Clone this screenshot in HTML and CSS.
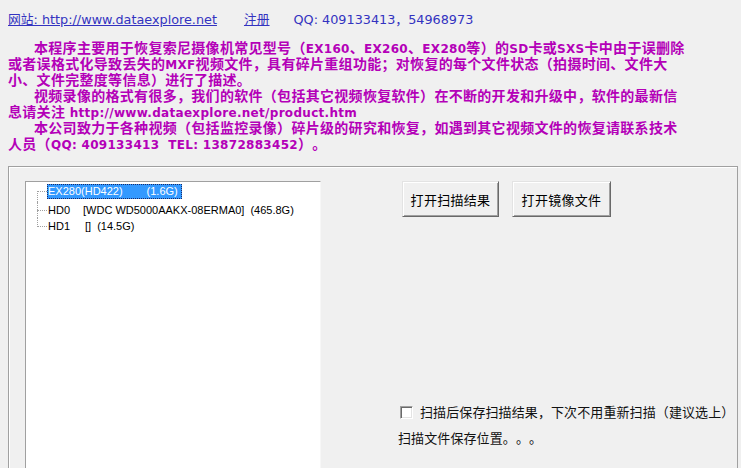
FILE: index.html
```html
<!DOCTYPE html>
<html>
<head>
<meta charset="utf-8">
<title>dataexplore</title>
<link rel="stylesheet" href="styles.css">
</head>
<body>
<div class="app">
  <div class="topbar">
    <a class="link site">网站: http://www.dataexplore.net</a>
    <a class="link reg">注册</a>
    <span class="qq">QQ: 409133413，54968973</span>
  </div>
  <div class="desc">
    <div class="ln ind">本程序主要用于恢复索尼摄像机常见型号（<span class="lat">EX160</span>、<span class="lat">EX260</span>、<span class="lat">EX280</span>等）的<span class="lat">SD</span>卡或<span class="lat">SXS</span>卡中由于误删除</div>
    <div class="ln">或者误格式化导致丢失的<span class="lat">MXF</span>视频文件，具有碎片重组功能；对恢复的每个文件状态（拍摄时间、文件大</div>
    <div class="ln">小、文件完整度等信息）进行了描述。</div>
    <div class="ln ind">视频录像的格式有很多，我们的软件（包括其它视频恢复软件）在不断的开发和升级中，软件的最新信</div>
    <div class="ln">息请关注<span class="lat"> http://www.dataexplore.net/product.htm</span></div>
    <div class="ln ind">本公司致力于各种视频（包括监控录像）碎片级的研究和恢复，如遇到其它视频文件的恢复请联系技术</div>
    <div class="ln">人员（<span class="lat">QQ: 409133413&nbsp; TEL: 13872883452</span>）。</div>
  </div>
  <div class="group">
    <div class="tree">
      <div class="row first">
        <span class="twig"></span>
        <span class="lbl sel"><span>EX280(HD422)</span><span class="g1">(1.6G)</span></span>
      </div>
      <div class="row mid">
        <span class="twig"></span>
        <span class="lbl"><span>HD0</span><span class="g2">[WDC WD5000AAKX-08ERMA0]</span><span class="g3">(465.8G)</span></span>
      </div>
      <div class="row last">
        <span class="twig"></span>
        <span class="lbl"><span>HD1</span><span class="g4">[]</span><span class="g3">(14.5G)</span></span>
      </div>
    </div>
    <div class="side">
      <div class="btns">
        <button class="btn b1">打开扫描结果</button>
        <button class="btn b2">打开镜像文件</button>
      </div>
      <label class="chk"><span class="box"></span><span>扫描后保存扫描结果，下次不用重新扫描（建议选上）</span></label>
      <div class="path">扫描文件保存位置。。。</div>
    </div>
  </div>
</div>
</body>
</html>
```

FILE: styles.css
```css
html, body {
  margin: 0;
  padding: 0;
}
body {
  background: #f0f0f0;
  width: 741px;
  height: 468px;
  overflow: hidden;
  font-family: "DejaVu Sans", "Noto Sans CJK SC", sans-serif;
  text-spacing-trim: space-all;
}
.app {
  width: 741px;
  height: 468px;
  overflow: hidden;
}
.topbar {
  display: flex;
  align-items: center;
  height: 16px;
  margin-top: 12px;
  padding-left: 8px;
  font-size: 12.8px;
  line-height: 16px;
  color: #3333c0;
  white-space: nowrap;
}
.link {
  color: inherit;
  text-decoration: underline;
}
.reg {
  margin-left: 27px;
}
.qq {
  margin-left: 24px;
}
.desc {
  margin-top: 12px;
  padding-left: 8px;
  font-family: "DejaVu Sans", "Noto Sans CJK SC", sans-serif;
  font-size: 14px;
  font-weight: 700;
  line-height: 16px;
  letter-spacing: 0.3px;
  color: #b400b8;
}
.ln {
  height: 16px;
  white-space: nowrap;
}
.ind {
  padding-left: 26px;
}
.lat {
  font-size: 12px;
}
.group {
  display: flex;
  align-items: flex-start;
  box-sizing: border-box;
  width: 730px;
  height: 400px;
  margin: 14px 0 0 8px;
  border: 1px solid #a0a0a0;
  box-shadow: inset 1px 1px 0 #ffffff;
}
.tree {
  box-sizing: border-box;
  flex: none;
  width: 296px;
  height: 320px;
  margin: 14px 0 0 16px;
  padding: 1px 0 0 11px;
  background: #ffffff;
  border-left: 1px solid #a0a0a0;
  border-top: 1px solid #a0a0a0;
  border-right: 1px solid #f7f7f7;
  font-family: "Liberation Sans", Arial, sans-serif;
  font-size: 11px;
  color: #000;
}
.row {
  display: flex;
  align-items: flex-start;
  height: 16px;
  line-height: 16px;
  white-space: nowrap;
}
.row.first {
  height: 19px;
}
.twig {
  position: relative;
  flex: none;
  width: 10px;
  align-self: stretch;
}
.twig::before {
  content: "";
  position: absolute;
  left: 0;
  top: 8px;
  width: 10px;
  border-top: 1px dotted #a0a0a0;
}
.twig::after {
  content: "";
  position: absolute;
  left: 0;
  top: 0;
  bottom: 0;
  border-left: 1px dotted #a0a0a0;
}
.first .twig::after {
  top: 8px;
}
.last .twig::after {
  bottom: auto;
  height: 9px;
}
.lbl {
  padding-left: 1px;
}
.sel {
  margin-top: 1px;
  padding: 0 3px 0 0;
  line-height: 13px;
  background: #3399ff;
  color: #ffffff;
  border: 1px dotted #1c2a66;
}
.g1 {
  margin-left: 24px;
}
.g2 {
  margin-left: 13px;
}
.g3 {
  margin-left: 6px;
}
.g4 {
  margin-left: 15px;
}
.side {
  flex: none;
  width: 339px;
  margin: 14px 0 0 77px;
  overflow: hidden;
  font-family: "Noto Sans CJK SC", sans-serif;
  font-size: 13px;
  letter-spacing: 0.1px;
  color: #111;
  white-space: nowrap;
}
.btns {
  display: flex;
  gap: 13px;
  margin-left: 4px;
}
.btn {
  box-sizing: border-box;
  height: 36px;
  padding: 0;
  font-family: inherit;
  font-size: 13px;
  letter-spacing: 0.3px;
  color: #000;
  background: #f0f0f0;
  border: 1px solid;
  border-color: #e3e3e3 #696969 #696969 #e3e3e3;
  box-shadow: inset 1px 1px 0 #ffffff, inset -1px -1px 0 #a0a0a0;
}
.b1 {
  width: 97px;
}
.b2 {
  width: 99px;
}
.chk {
  display: flex;
  align-items: center;
  height: 18px;
  margin-top: 186px;
  line-height: 18px;
}
.box {
  box-sizing: border-box;
  flex: none;
  width: 13px;
  height: 13px;
  margin: 0 7px 0 2px;
  background: #ffffff;
  border: 1px solid;
  border-color: #a0a0a0 #ffffff #ffffff #a0a0a0;
  box-shadow: inset 1px 1px 0 #696969, inset -1px -1px 0 #e3e3e3;
}
.path {
  height: 18px;
  margin-top: 8px;
  line-height: 18px;
}
```
